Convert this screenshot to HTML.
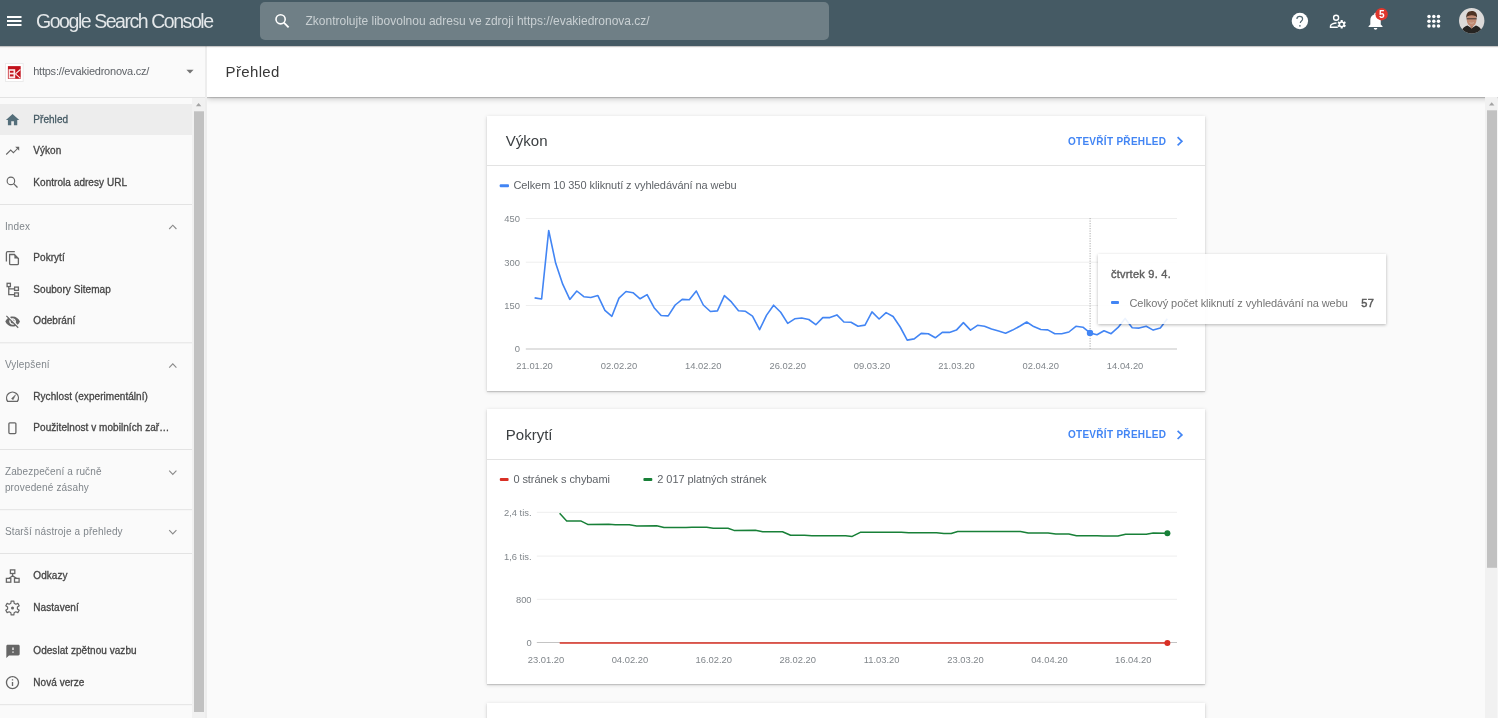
<!DOCTYPE html>
<html><head><meta charset="utf-8">
<style>
*{box-sizing:border-box}
html,body{margin:0;padding:0}
body{width:1500px;height:718px;overflow:hidden;position:relative;background:#fafafa;font-family:"Liberation Sans",sans-serif;color:#3c4043}
.abs{position:absolute}
.t{position:absolute;white-space:nowrap;line-height:1}
.nav{color:#454545;-webkit-text-stroke:0.3px #454545;letter-spacing:0.05px}
.sec{color:#80868b;letter-spacing:0.15px}
#phdr{clip-path:inset(0 0 -12px 0);left:207px;top:46px;width:1291px;height:51px;background:#fff;box-shadow:0 1px 1px rgba(0,0,0,.18),0 2px 6px rgba(0,0,0,.2)}
.card{position:absolute;left:487px;width:718px;background:#fff;box-shadow:0 1px 1px rgba(0,0,0,.14),0 1px 4px 0 rgba(0,0,0,.16)}
.open{font-weight:bold;color:#4285f4;letter-spacing:0.3px}
.lg{color:#5f6368;letter-spacing:-0.07px}
.ax{font-family:"Liberation Sans",sans-serif;font-size:9.4px;fill:#80868b}
</style></head>
<body>
<div class="abs" style="left:0;top:46px;width:205px;height:672px;background:#fafafa"></div>
<div class="abs" style="left:205px;top:46px;width:2px;height:672px;background:#ededed"></div>
<div class="abs" style="left:0;top:104px;width:192px;height:31px;background:#ededed"></div>
<div class="card" style="top:116px;height:274.5px"></div>
<div class="card" style="top:409px;height:275px"></div>
<div class="card" style="top:703px;height:60px"></div>
<div class="abs" id="phdr"></div>
<div class="abs" style="left:0;top:0;width:1498px;height:46px;background:#455a64;box-shadow:0 1px 1px rgba(0,0,0,.22)"></div>
<div class="abs" style="left:260px;top:2px;width:569px;height:38px;background:#6f7f86;border-radius:5px"></div>
<svg class="abs" style="left:0;top:0;will-change:transform" width="1500" height="718">
<!-- hamburger -->
<rect x="7" y="16" width="14.5" height="2" fill="#fff"/>
<rect x="7" y="20" width="14.5" height="2" fill="#fff"/>
<rect x="7" y="24" width="14.5" height="2" fill="#fff"/>
<!-- search icon -->
<circle cx="280.6" cy="19.3" r="4.6" fill="none" stroke="#fff" stroke-width="1.6"/>
<line x1="283.9" y1="22.6" x2="288.6" y2="27.3" stroke="#fff" stroke-width="1.8"/>
<!-- help -->
<circle cx="1299.9" cy="21" r="8.2" fill="#fff"/>
<path d="M1296.9 19.1c0-1.6 1.3-2.7 2.9-2.7s2.8 1.1 2.8 2.6c0 1.8-2.3 2.1-2.3 3.9" fill="none" stroke="#526770" stroke-width="1.2"/>
<rect x="1299.2" y="25.1" width="1.4" height="1.5" fill="#526770"/>
<!-- admin -->
<circle cx="1336.1" cy="17.8" r="2.5" fill="none" stroke="#fff" stroke-width="1.4"/>
<path d="M1337.8 27.2h-7.3v-1.3c0-1.4 3.2-2.9 6-2.9" fill="none" stroke="#fff" stroke-width="1.4"/>
<path d="M1340.59 21.41 L1340.71 20.01 L1342.69 20.01 L1342.81 21.41 L1343.65 21.89 L1344.92 21.30 L1345.91 23.01 L1344.76 23.82 L1344.76 24.78 L1345.91 25.59 L1344.92 27.30 L1343.65 26.71 L1342.81 27.19 L1342.69 28.59 L1340.71 28.59 L1340.59 27.19 L1339.75 26.71 L1338.48 27.30 L1337.49 25.59 L1338.64 24.78 L1338.64 23.82 L1337.49 23.01 L1338.48 21.30 L1339.75 21.89z M1343.3 24.3a1.6 1.6 0 1 0 -3.2 0a1.6 1.6 0 1 0 3.2 0z" fill="#fff" fill-rule="evenodd"/>
<!-- bell -->
<g transform="translate(1365.1,10.5) scale(0.87)"><path d="M12 22c1.1 0 2-.9 2-2h-4c0 1.1.89 2 2 2zm6-6v-5c0-3.07-1.64-5.64-4.5-6.32V4c0-.83-.67-1.5-1.5-1.5s-1.5.67-1.5 1.5v.68C7.63 5.36 6 7.92 6 11v5l-2 2v1h16v-1l-2-2z" fill="#fff"/></g>
<circle cx="1381.6" cy="14.2" r="6.2" fill="#e0362c"/>
<text x="1381.7" y="17.9" text-anchor="middle" font-family="Liberation Sans" font-weight="bold" font-size="10" fill="#fff">5</text>
<!-- apps -->
<g fill="#fff">
<circle cx="1429" cy="16.4" r="1.75"/><circle cx="1433.8" cy="16.4" r="1.75"/><circle cx="1438.5" cy="16.4" r="1.75"/>
<circle cx="1429" cy="21.2" r="1.75"/><circle cx="1433.8" cy="21.2" r="1.75"/><circle cx="1438.5" cy="21.2" r="1.75"/>
<circle cx="1429" cy="25.9" r="1.75"/><circle cx="1433.8" cy="25.9" r="1.75"/><circle cx="1438.5" cy="25.9" r="1.75"/>
</g>
<!-- avatar -->
<defs><clipPath id="av"><circle cx="1471.7" cy="20.8" r="12.7"/></clipPath></defs>
<g clip-path="url(#av)">
<rect x="1458" y="8" width="28" height="26" fill="#dcdad9"/>
<path d="M1461 34c0.5-5 2.5-7.3 6.5-8.6l4.2 2.8 4.2-2.8c4 1.3 6 3.6 6.5 8.6z" fill="#262422"/>
<path d="M1469.3 24.5h4.8l-2.4 4.6z" fill="#b27a64"/>
<ellipse cx="1471.6" cy="20" rx="4.9" ry="6.2" fill="#c08a73"/>
<path d="M1466.3 18.2c-.4-4.4 1.6-7.2 5.4-7.2 3.9 0 5.8 2.6 5.3 7.1-.9-2-2.4-2.8-5.3-2.8s-4.5.9-5.4 2.9z" fill="#4e3324"/>
<path d="M1466.6 18.8h10.1" stroke="#2e2a2a" stroke-width="0.9"/>
<path d="M1469.5 22.6c1.3.8 3 .8 4.3 0" stroke="#dcc0b0" stroke-width="0.8" fill="none"/>
</g>
<!-- favicon -->
<rect x="5.5" y="63.5" width="17.7" height="18" fill="#fff" stroke="#ebebeb" stroke-width="1"/>
<rect x="7.9" y="66.1" width="12.8" height="12.7" fill="#c2121c"/>
<rect x="8.6" y="69.2" width="6.6" height="9.2" fill="#fbeaea"/>
<rect x="9.9" y="70.8" width="3.6" height="1.9" fill="#c2121c"/>
<rect x="9.9" y="74.4" width="3.6" height="2" fill="#c2121c"/>
<path d="M15.4 73.8l5-4.3M15.4 73.8l4.9 4.4" stroke="#fbeaea" stroke-width="1.1" fill="none"/>
<!-- dropdown -->
<path d="M186.4 69.7h7.2l-3.6 3.7z" fill="#757575"/>
<!-- sidebar dividers -->
<rect x="0" y="97" width="205" height="1" fill="#e3e3e3"/>
<g fill="#e3e3e3">
<rect x="0" y="204" width="192" height="1"/>
<rect x="0" y="342.3" width="192" height="1"/>
<rect x="0" y="449" width="192" height="1"/>
<rect x="0" y="509.2" width="192" height="1"/>
<rect x="0" y="553" width="192" height="1"/>
<rect x="0" y="704.2" width="192" height="1"/>
</g>
<!-- sidebar scrollbar -->
<rect x="192" y="98" width="13" height="620" fill="#f1f1f1"/>
<path d="M195.9 106.2h5.4l-2.7-3.2z" fill="#a3a3a3"/>
<rect x="194" y="111.3" width="10" height="600.7" fill="#c1c1c1"/>
<!-- sidebar icons -->
<g fill="#546e7a" transform="translate(4.57,111.9) scale(0.667)"><path d="M10 20v-6h4v6h5v-8h3L12 3 2 12h3v8z"/></g>
<g fill="#666666">
<path d="M6.2 154.5L10.7 150.1L13.4 152.7L17.6 148.5" fill="none" stroke="#666666" stroke-width="1.05"/><path d="M15.2 146.7H19.2V150.7z"/>
<circle cx="10.9" cy="180.9" r="3.75" fill="none" stroke="#666666" stroke-width="1.15"/><path d="M13.6 183.6L17.5 187.5" stroke="#666666" stroke-width="1.3"/>
<g transform="translate(4.63,313.5) scale(0.667)"><path d="M12 7c2.76 0 5 2.24 5 5 0 .65-.13 1.26-.36 1.83l2.92 2.92c1.51-1.26 2.7-2.89 3.430-4.75-1.73-4.390-6-7.5-11-7.5-1.4 0-2.74.25-3.98.7l2.16 2.16C10.74 7.13 11.35 7 12 7zM2 4.27l2.28 2.28.46.46C3.08 8.3 1.78 10.02 1 12c1.73 4.39 6 7.5 11 7.5 1.55 0 3.03-.3 4.38-.84l.42.42L19.73 22 21 20.73 3.27 3 2 4.27zM7.53 9.8l1.55 1.55c-.05.21-.08.43-.08.65 0 1.66 1.34 3 3 3 .22 0 .44-.03.65-.08l1.55 1.55c-.67.33-1.41.53-2.2.53-2.76 0-5-2.240-5-5 0-.79.2-1.53.53-2.2zm4.31-.78l3.15 3.15.02-.16c0-1.66-1.34-3-3-3l-.17.01z"/></g>
<g transform="translate(5,643.4) scale(0.667)"><path d="M20 2H4c-1.1 0-1.99.9-1.99 2L2 22l4-4h14c1.1 0 2-.9 2-2V4c0-1.1-.9-2-2-2zm-7 12h-2v-2h2v2zm0-4h-2V6h2v4z"/></g>
<g transform="translate(4.5,674.6) scale(0.667)"><path d="M11 7h2v2h-2zm0 4h2v6h-2zm1-9C6.48 2 2 6.48 2 12s4.48 10 10 10 10-4.48 10-10S17.520 2 12 2zm0 18c-4.41 0-8-3.59-8-8s3.590-8 8-8 8 3.59 8 8-3.59 8-8 8z"/></g>
</g>
<g fill="none" stroke="#666666" stroke-width="1.3">
<!-- pokryti -->
<path d="M6.4 261.4V252.9q0-1.3 1.3-1.3H14.8"/>
<path d="M9.6 254.5H14.4L18.4 258.5V263.4q0 1.2-1.2 1.2H10.8q-1.2 0-1.2-1.2z"/><path d="M14.4 254.5V258.4H18.4z" fill="#666666" stroke="none"/>
<!-- sitemap -->
<rect x="7.1" y="283.3" width="3.3" height="3.3"/>
<rect x="14.6" y="287.1" width="3.8" height="3.3"/>
<rect x="14.6" y="292.9" width="3.8" height="3.3"/>
<path d="M8.75 286.6v8h5.85M8.75 288.8h5.85"/>
<!-- gauge -->
<path d="M7.6 401.3H17.4A5.9 5.9 0 1 0 7.6 401.3z"/>
<!-- phone -->
<rect x="8.9" y="422.8" width="7" height="10.8" rx="1"/>
<!-- odkazy -->
<rect x="10.4" y="569.9" width="4.4" height="3.6"/>
<rect x="6.4" y="578.4" width="4.4" height="3.8"/>
<rect x="14.5" y="578.4" width="4.6" height="3.8"/>
<path d="M12.6 573.5v2.2L9 578.4M12.6 575.7l3.8 2.7"/>
<!-- gear -->
</g>
<path d="M11.5 398.6L15.6 394.8L13.1 399.7z" fill="#666666" stroke="#666666" stroke-width="0.5" stroke-linejoin="round"/>
<circle cx="12.5" cy="608" r="1.5" fill="#666666"/>
<path d="M10.87 603.27 L11.15 601.03 L13.85 601.03 L14.13 603.27 L15.78 604.23 L17.86 603.34 L19.21 605.69 L17.41 607.05 L17.41 608.95 L19.21 610.31 L17.86 612.66 L15.78 611.77 L14.13 612.73 L13.85 614.97 L11.15 614.97 L10.87 612.73 L9.22 611.77 L7.14 612.66 L5.79 610.31 L7.59 608.95 L7.59 607.05 L5.79 605.69 L7.14 603.34 L9.22 604.23z" fill="none" stroke="#666666" stroke-width="1.2" stroke-linejoin="round"/>
<!-- chevrons -->
<g fill="none" stroke="#8a8a8a" stroke-width="1.1">
<path d="M169.2 229l3.6-3.8 3.6 3.8"/>
<path d="M169.2 367.7l3.6-3.8 3.6 3.8"/>
<path d="M169.2 470.6l3.6 3.8 3.6-3.8"/>
<path d="M169.2 530.2l3.6 3.8 3.6-3.8"/>
</g>
<!-- main scrollbar -->
<rect x="1485" y="97" width="12.5" height="621" fill="#f1f1f1"/>
<path d="M1489 105.6h5.4l-2.7-3.3z" fill="#a3a3a3"/>
<rect x="1487" y="110.3" width="10" height="457.5" fill="#c1c1c1"/>
<!-- card chevrons -->
<g fill="none" stroke="#4285f4" stroke-width="1.7">
<path d="M1177.6 137.2l4.3 4.1-4.3 4.1"/>
<path d="M1177.6 430.8l4.3 4.1-4.3 4.1"/>
</g>
<!-- card dividers -->
<rect x="487" y="165" width="718" height="1" fill="#e3e3e3"/>
<rect x="487" y="459" width="718" height="1" fill="#e3e3e3"/>
<!-- legend dashes -->
<rect x="499.7" y="184.2" width="9.3" height="3" rx="1" fill="#4285f4"/>
<rect x="499.8" y="477.9" width="8.8" height="3" rx="1" fill="#d93025"/>
<rect x="643.4" y="477.9" width="8.9" height="3" rx="1" fill="#188038"/>
<!-- chart 1 grid -->
<g fill="#eeeeee">
<rect x="525.8" y="218" width="651.2" height="1"/>
<rect x="525.8" y="261.7" width="651.2" height="1"/>
<rect x="525.8" y="305" width="651.2" height="1"/>
</g>
<rect x="525.8" y="348.5" width="651.2" height="1" fill="#c4c4c4"/>
<line x1="1090.1" y1="218" x2="1090.1" y2="349" stroke="#aaaaaa" stroke-width="1" stroke-dasharray="1.2 1.3"/>
<g class="ax" text-anchor="end">
<text x="520" y="222">450</text><text x="520" y="265.6">300</text><text x="520" y="308.8">150</text><text x="520" y="352.2">0</text>
</g>
<g class="ax" text-anchor="middle">
<text x="534.6" y="369">21.01.20</text><text x="619" y="369">02.02.20</text><text x="703.3" y="369">14.02.20</text><text x="787.7" y="369">26.02.20</text><text x="872" y="369">09.03.20</text><text x="956.4" y="369">21.03.20</text><text x="1040.8" y="369">02.04.20</text><text x="1125.1" y="369">14.04.20</text>
</g>
<polyline points="534.6,297.9 541.6,299 548.7,230.5 555.7,263.3 562.7,284.2 569.8,299.4 576.8,291 583.8,296.7 590.8,297.5 597.9,295.6 604.9,310.3 611.9,316.3 619.0,298.1 626.0,291.5 633.0,292.7 640.1,298.8 647.1,294.6 654.1,307.7 661.1,315.5 668.2,315.9 675.2,305 682.2,299.4 689.3,299.8 696.3,291 703.3,305 710.4,311.5 717.4,310.9 724.4,295.6 731.4,301.9 738.5,310.7 745.5,311.3 752.5,316.1 759.6,329.7 766.6,315.1 773.6,305.2 780.7,312.3 787.7,323.4 794.7,318.8 801.7,318 808.8,319.5 815.8,324.7 822.8,317.6 829.9,317.6 836.9,314.9 843.9,322 851.0,322.2 858.0,326.3 865.0,325.1 872.0,311.9 879.1,319 886.1,312.6 893.1,316.5 900.2,327 907.2,340.1 914.2,338.9 921.2,333.4 928.3,333.7 935.3,337.8 942.3,332.4 949.4,332.4 956.4,330.1 963.4,322.6 970.5,330.1 977.5,325.3 984.5,326.3 991.5,329.1 998.6,331.1 1005.6,333.2 1012.6,330.1 1019.7,326.3 1026.7,322 1033.7,326.6 1040.8,329.5 1047.8,329.9 1054.8,333.7 1061.8,333.7 1068.9,332 1075.9,326.3 1082.9,327.2 1090.0,332.9 1097.0,334.8 1104.0,330.7 1111.1,333.7 1118.1,327.4 1125.1,318.4 1132.2,327.7 1139.2,328.1 1146.2,326.2 1153.2,330.1 1160.3,327.9 1167.3,318.8" fill="none" stroke="#4285f4" stroke-width="1.6" stroke-linejoin="round"/>
<circle cx="1090" cy="332.9" r="3.2" fill="#4285f4"/>
<!-- chart 2 -->
<g fill="#eeeeee">
<rect x="536.8" y="511.8" width="640.2" height="1"/>
<rect x="536.8" y="555.6" width="640.2" height="1"/>
<rect x="536.8" y="598.8" width="640.2" height="1"/>
</g>
<rect x="536.8" y="642" width="640.2" height="1" fill="#c4c4c4"/>
<g class="ax" text-anchor="end">
<text x="531.6" y="515.6">2,4 tis.</text><text x="531.6" y="559.5">1,6 tis.</text><text x="531.6" y="602.7">800</text><text x="531.6" y="645.9">0</text>
</g>
<g class="ax" text-anchor="middle">
<text x="546" y="662.8">23.01.20</text><text x="629.9" y="662.8">04.02.20</text><text x="713.8" y="662.8">16.02.20</text><text x="797.7" y="662.8">28.02.20</text><text x="881.6" y="662.8">11.03.20</text><text x="965.5" y="662.8">23.03.20</text><text x="1049.4" y="662.8">04.04.20</text><text x="1133.3" y="662.8">16.04.20</text>
</g>
<polyline points="559.6,513.3 566.7,520.9 580.7,520.9 587.7,524.4 608.7,524.3 615.3,524.7 629.3,524.7 636.7,526 656.7,525.7 664,527.6 686,527.6 692,527.3 706.7,527.3 713.3,528.3 728,528.3 734,530.4 755.4,530.2 762.7,531.7 782.5,531.7 790.6,535.2 804.5,535.2 811.9,535.7 845.6,535.7 852.2,536.4 860.3,532.3 901.3,532.3 908.7,532.7 936.5,532.7 943.9,533.5 951.2,533.5 957.7,531.5 1020.5,531.5 1028.2,533 1048.1,533 1055.8,534.1 1068.8,534.1 1076.5,535.8 1097.2,535.8 1103.3,536.1 1117.9,536.1 1125.6,534.2 1146.3,534.2 1153.2,533 1167.4,533.3" fill="none" stroke="#188038" stroke-width="1.5" stroke-linejoin="round"/>
<circle cx="1167.4" cy="533.3" r="3" fill="#188038"/>
<line x1="559.7" y1="643" x2="1167.4" y2="643" stroke="#d93025" stroke-width="1.6"/>
<circle cx="1167.4" cy="643" r="3" fill="#d93025"/>
</svg>
<div class="abs" style="left:1098px;top:254px;width:288px;height:70px;background:rgba(255,255,255,.9);box-shadow:0 1px 3px rgba(0,0,0,.28)"></div>
<div class="abs" style="left:1110.9px;top:301px;width:8.6px;height:2.6px;background:#4285f4;border-radius:1px"></div>
<div class="abs" style="left:0;top:0;width:1500px;height:718px;will-change:transform">
<div class="t" style="left:36px;top:12px;font-size:19.5px;color:#e3e7e9;letter-spacing:-1.45px">Google Search Console</div>
<div class="t" style="left:305.5px;top:15px;font-size:12px;color:#c9d0d3">Zkontrolujte libovolnou adresu ve zdroji https://evakiedronova.cz/</div>
<div class="t" style="left:33.2px;top:66px;font-size:11px;color:#5f6368;letter-spacing:-0.23px">https://evakiedronova.cz/</div>
<div class="t" style="left:225.6px;top:64px;font-size:15px;color:#383838;letter-spacing:0.35px">Přehled</div>
<div class="t nav" style="left:33.3px;top:115px;font-size:10px;color:#455a64;-webkit-text-stroke:0.3px #455a64">Přehled</div>
<div class="t nav" style="left:33.3px;top:146px;font-size:10px;">Výkon</div>
<div class="t nav" style="left:33.3px;top:178px;font-size:10px;">Kontrola adresy URL</div>
<div class="t nav" style="left:33.3px;top:253px;font-size:10px;">Pokrytí</div>
<div class="t nav" style="left:33.3px;top:285px;font-size:10px;">Soubory Sitemap</div>
<div class="t nav" style="left:33.3px;top:316px;font-size:10px;">Odebrání</div>
<div class="t nav" style="left:33.3px;top:392px;font-size:10px;">Rychlost (experimentální)</div>
<div class="t nav" style="left:33.3px;top:423px;font-size:10px;">Použitelnost v mobilních zař…</div>
<div class="t nav" style="left:33.3px;top:571px;font-size:10px;">Odkazy</div>
<div class="t nav" style="left:33.3px;top:603px;font-size:10px;">Nastavení</div>
<div class="t nav" style="left:33.3px;top:646px;font-size:10px;">Odeslat zpětnou vazbu</div>
<div class="t nav" style="left:33.3px;top:678px;font-size:10px;">Nová verze</div>
<div class="t sec" style="left:4.9px;top:222px;font-size:10px;">Index</div>
<div class="t sec" style="left:4.9px;top:360px;font-size:10px;">Vylepšení</div>
<div class="t sec" style="left:4.9px;top:467px;font-size:10px;">Zabezpečení a ručně</div>
<div class="t sec" style="left:4.9px;top:483px;font-size:10px;">provedené zásahy</div>
<div class="t sec" style="left:4.9px;top:527px;font-size:10px;">Starší nástroje a přehledy</div>
<div class="t" style="left:505.8px;top:133px;font-size:15px;color:#3c4043">Výkon</div>
<div class="t" style="left:505.8px;top:427px;font-size:15px;color:#3c4043">Pokrytí</div>
<div class="t open" style="left:1067.9px;top:137px;font-size:10px;">OTEVŘÍT PŘEHLED</div>
<div class="t open" style="left:1067.9px;top:430px;font-size:10px;">OTEVŘÍT PŘEHLED</div>
<div class="t lg" style="left:513.4px;top:180px;font-size:11px;">Celkem 10 350 kliknutí z vyhledávání na webu</div>
<div class="t lg" style="left:513.4px;top:474px;font-size:11px;">0 stránek s chybami</div>
<div class="t lg" style="left:657.3px;top:474px;font-size:11px;">2 017 platných stránek</div>
<div class="t" style="left:1110.9px;top:269px;font-size:11px;color:#5f5f5f;-webkit-text-stroke:0.4px #5f5f5f;letter-spacing:0.25px">čtvrtek 9. 4.</div>
<div class="t" style="left:1129.5px;top:298px;font-size:11px;color:#757575;letter-spacing:-0.07px">Celkový počet kliknutí z vyhledávání na webu</div>
<div class="t" style="left:1361.3px;top:298px;font-size:11px;color:#5a5a5a;-webkit-text-stroke:0.5px #5a5a5a;letter-spacing:0.3px">57</div>
</div>
<div class="abs" style="left:1498px;top:0;width:2px;height:718px;background:#fff"></div>
</body></html>
